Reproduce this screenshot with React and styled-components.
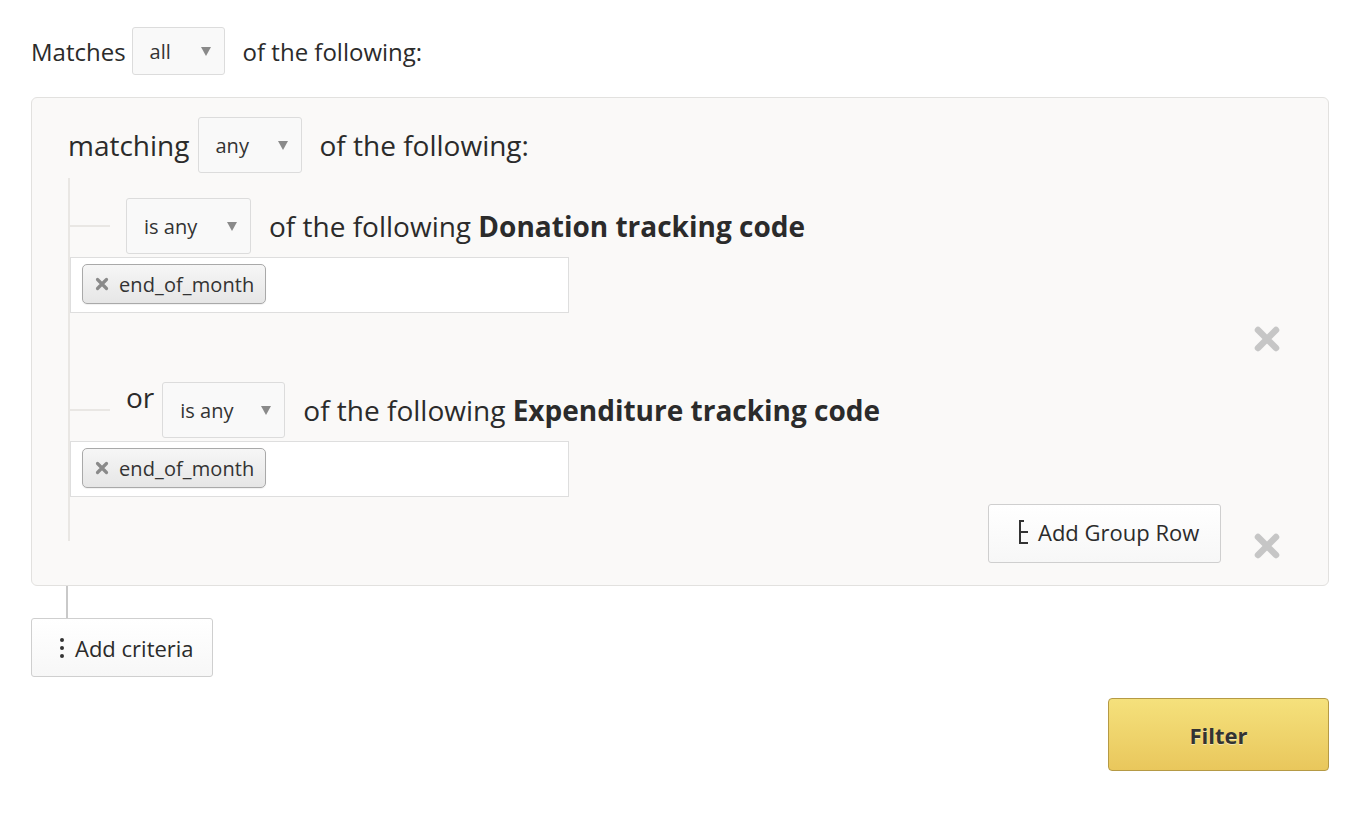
import React from "react";
import styled, { createGlobalStyle } from "styled-components";

const Global = createGlobalStyle`
  html, body { margin: 0; padding: 0; background: #fff; }
  body { font-family: "Open Sans", "Liberation Sans", sans-serif; color: #2b2b2b; }
  * { box-sizing: border-box; }
`;

const Page = styled.div`
  padding: 27px 37px 40px 31px;
  width: 1366px;
`;

const TopLine = styled.div`
  display: flex;
  align-items: center;
  font-size: 24px;
  color: #222;
  height: 48px;
`;

const Text = styled.span`
  font-size: ${(p) => p.$size || 28}px;
  font-weight: ${(p) => (p.$bold ? 700 : 400)};
  white-space: nowrap;
  color: #2b2b2b;
`;

const SelectBox = styled.div`
  display: flex;
  align-items: center;
  justify-content: space-between;
  width: ${(p) => p.$w}px;
  height: ${(p) => p.$h || 56}px;
  margin: 0 18px 0 ${(p) => p.$ml ?? 6}px;
  padding: 0 13px 0 17px;
  background: #f9f9f9;
  border: 1px solid #dcdcdc;
  border-radius: 3px;
  font-size: 20px;
  color: #333;
  flex-shrink: 0;
`;

const Arrow = styled.span`
  width: 0;
  height: 0;
  border-left: 5px solid transparent;
  border-right: 5px solid transparent;
  border-top: 9px solid #8a8a8a;
`;

const Select = ({ value, w, h, ml }) => (
  <SelectBox $w={w} $h={h} $ml={ml}>
    <span>{value}</span>
    <Arrow />
  </SelectBox>
);

const Panel = styled.div`
  margin-top: 22px;
  background: #faf9f8;
  border: 1px solid #e2e1df;
  border-radius: 6px;
  padding: 19px 48px 22px 36px;
`;

const Heading = styled.div`
  display: flex;
  align-items: center;
  height: 56px;
`;

const Tree = styled.div`
  position: relative;
  margin-top: 5px;
  padding: 20px 0 0 2px;
  display: flex;
  flex-direction: column;
  gap: 29px;
  &::before {
    content: "";
    position: absolute;
    left: 0;
    top: 0;
    bottom: 22px;
    width: 2px;
    background: #e9e7e4;
  }
`;

const Row = styled.div`
  display: grid;
  grid-template-columns: 1fr 26px;
  column-gap: 33px;
`;

const RowMain = styled.div`
  display: flex;
  flex-direction: column;
  padding-bottom: ${(p) => p.$pb || 0}px;
`;

const RowHead = styled.div`
  display: flex;
  align-items: center;
  height: 56px;
`;

const Connector = styled.span`
  width: 40px;
  height: 2px;
  background: #e9e7e4;
  margin-right: ${(p) => p.$mr}px;
  flex-shrink: 0;
`;

const OrLabel = styled.span`
  font-size: 28px;
  line-height: 28px;
  align-self: flex-start;
  margin-top: 1px;
  color: #2b2b2b;
`;

const TagBox = styled.div`
  margin-top: 3px;
  width: 499px;
  height: 56px;
  background: #fff;
  border: 1px solid #dedede;
  padding: 6px 11px;
  display: flex;
  align-items: flex-start;
`;

const Chip = styled.div`
  display: flex;
  align-items: center;
  gap: 10px;
  height: 40px;
  padding: 0 11px 0 12px;
  border: 1px solid #a9a9a9;
  border-radius: 5px;
  background: linear-gradient(#f6f6f6, #e6e6e6);
  box-shadow: 0 1px 1px rgba(0, 0, 0, 0.06);
  font-size: 20px;
  letter-spacing: 0.1px;
  color: #333;
`;

const ChipX = () => (
  <svg width="14" height="14" viewBox="0 0 14 14">
    <path d="M2.5 2.5L11.5 11.5M11.5 2.5L2.5 11.5" stroke="#8a8a8a" strokeWidth="3.2" strokeLinecap="round" />
  </svg>
);

const RemoveWrap = styled.div`
  align-self: end;
  width: 26px;
  height: 26px;
  margin-bottom: ${(p) => p.$mb || 0}px;
`;

const Remove = ({ mb }) => (
  <RemoveWrap $mb={mb}>
    <svg width="26" height="26" viewBox="0 0 26 26">
      <path d="M4 4L22 22M22 4L4 22" stroke="#c6c6c6" strokeWidth="6.5" strokeLinecap="round" />
    </svg>
  </RemoveWrap>
);

const Button = styled.button`
  display: flex;
  align-items: center;
  gap: 8px;
  height: 59px;
  width: ${(p) => p.$w}px;
  padding: 0 0 0 ${(p) => p.$pl}px;
  background: linear-gradient(#ffffff, #f7f7f7);
  border: 1px solid #cfcfcf;
  border-radius: 3px;
  font-family: "Open Sans", "Liberation Sans", sans-serif;
  font-size: 22px;
  color: #2b2b2b;
  cursor: pointer;
`;

const GroupButton = styled(Button)`
  align-self: flex-end;
  margin-top: 7px;
  padding-bottom: 4px;
`;

const TreeIcon = () => (
  <svg width="12" height="26" viewBox="0 0 12 26">
    <path d="M2 1V25M2 2H6M2 13H10M2 24H10" stroke="#333" strokeWidth="2" fill="none" />
  </svg>
);

const Dots = styled.span`
  display: flex;
  flex-direction: column;
  gap: 4px;
  margin-right: 3px;
  & > i {
    display: block;
    width: 4px;
    height: 4px;
    border-radius: 50%;
    background: #333;
  }
`;

const Stem = styled.div`
  width: 2px;
  height: 32px;
  margin-left: 35px;
  background: #c9c9c9;
`;

const FilterRow = styled.div`
  display: flex;
  justify-content: flex-end;
  margin-top: 21px;
`;

const FilterButton = styled.button`
  width: 221px;
  height: 73px;
  border: 1px solid #b59a45;
  border-radius: 4px;
  background: linear-gradient(#f5e17c, #e9c75c);
  font-family: "Open Sans", "Liberation Sans", sans-serif;
  font-weight: 700;
  font-size: 22px;
  color: #333;
  text-shadow: 0 1px 0 rgba(255, 255, 255, 0.5);
  cursor: pointer;
`;

export default function App() {
  return (
    <Page>
      <Global />
      <TopLine>
        <Text $size={24}>Matches</Text>
        <Select value="all" w={93} h={48} />
        <Text $size={24}>of the following:</Text>
      </TopLine>

      <Panel>
        <Heading>
          <Text>matching</Text>
          <Select value="any" w={104} ml={8} />
          <Text>of the following:</Text>
        </Heading>

        <Tree>
          <Row>
            <RowMain $pb={40}>
              <RowHead>
                <Connector $mr={16} />
                <Select value="is any" w={125} ml={0} />
                <Text>
                  of the following <Text $bold>Donation tracking code</Text>
                </Text>
              </RowHead>
              <TagBox>
                <Chip>
                  <ChipX />
                  <span>end_of_month</span>
                </Chip>
              </TagBox>
            </RowMain>
            <Remove mb={1} />
          </Row>

          <Row>
            <RowMain>
              <RowHead>
                <Connector $mr={16} />
                <OrLabel>or</OrLabel>
                <Select value="is any" w={123} ml={8} />
                <Text>
                  of the following <Text $bold>Expenditure tracking code</Text>
                </Text>
              </RowHead>
              <TagBox>
                <Chip>
                  <ChipX />
                  <span>end_of_month</span>
                </Chip>
              </TagBox>
              <GroupButton $w={233} $pl={29}>
                <TreeIcon />
                <span>Add Group Row</span>
              </GroupButton>
            </RowMain>
            <Remove mb={4} />
          </Row>
        </Tree>
      </Panel>

      <Stem />
      <Button $w={182} $pl={28}>
        <Dots>
          <i />
          <i />
          <i />
        </Dots>
        <span>Add criteria</span>
      </Button>

      <FilterRow>
        <FilterButton>Filter</FilterButton>
      </FilterRow>
    </Page>
  );
}
